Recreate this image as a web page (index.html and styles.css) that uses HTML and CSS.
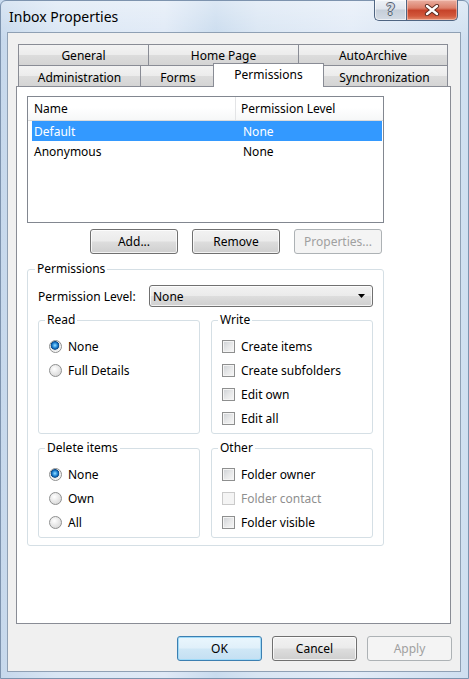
FILE: index.html
```html
<!DOCTYPE html>
<html>
<head>
<meta charset="utf-8">
<title>Inbox Properties</title>
<link rel="stylesheet" href="styles.css">
</head>
<body>
<div class="window">
  <div class="titlebar">
    <span class="title">Inbox Properties</span>
    <div class="caption">
      <div class="cap-btn help"><span class="help-glyph">?</span></div>
      <div class="cap-btn close">
        <svg width="16" height="12" viewBox="0 0 16 12">
          <path d="M3 2 L13 10 M13 2 L3 10" stroke="#5a2a20" stroke-width="4.2" stroke-linecap="round" fill="none"/>
          <path d="M3 2 L13 10 M13 2 L3 10" stroke="#ffffff" stroke-width="2.4" stroke-linecap="round" fill="none"/>
        </svg>
      </div>
    </div>
  </div>
  <div class="client">
    <div class="tabs">
      <div class="tabrow row1">
        <div class="tab w-general">General</div>
        <div class="tab w-home">Home Page</div>
        <div class="tab w-archive">AutoArchive</div>
      </div>
      <div class="tabrow row2">
        <div class="tab w-admin">Administration</div>
        <div class="tab w-forms">Forms</div>
        <div class="tab selected w-perm">Permissions</div>
        <div class="tab w-sync">Synchronization</div>
      </div>
    </div>
    <div class="panel">
      <div class="listview">
        <div class="lv-header">
          <div class="lv-col c-name">Name</div>
          <div class="lv-col c-level">Permission Level</div>
          <div class="lv-fill"></div>
        </div>
        <div class="lv-row selected">
          <span class="c-name">Default</span>
          <span class="c-level">None</span>
        </div>
        <div class="lv-row">
          <span class="c-name">Anonymous</span>
          <span class="c-level">None</span>
        </div>
      </div>
      <div class="list-buttons">
        <button class="btn">Add...</button>
        <button class="btn">Remove</button>
        <button class="btn disabled">Properties...</button>
      </div>
      <fieldset class="group outer">
        <legend>Permissions</legend>
        <div class="level-row">
          <span class="level-label">Permission Level:</span>
          <div class="combo">
            <span>None</span>
            <svg width="7" height="4" viewBox="0 0 7 4"><path d="M0 0 H7 L3.5 4 Z" fill="#000"/></svg>
          </div>
        </div>
        <div class="subgrid">
          <fieldset class="group sub">
            <legend>Read</legend>
            <div class="opt"><span class="radio checked"></span>None</div>
            <div class="opt"><span class="radio"></span>Full Details</div>
          </fieldset>
          <fieldset class="group sub">
            <legend>Write</legend>
            <div class="opt"><span class="check"></span>Create items</div>
            <div class="opt"><span class="check"></span>Create subfolders</div>
            <div class="opt"><span class="check"></span>Edit own</div>
            <div class="opt"><span class="check"></span>Edit all</div>
          </fieldset>
          <fieldset class="group sub">
            <legend>Delete items</legend>
            <div class="opt"><span class="radio checked"></span>None</div>
            <div class="opt"><span class="radio"></span>Own</div>
            <div class="opt"><span class="radio"></span>All</div>
          </fieldset>
          <fieldset class="group sub">
            <legend>Other</legend>
            <div class="opt"><span class="check"></span>Folder owner</div>
            <div class="opt disabled"><span class="check"></span>Folder contact</div>
            <div class="opt"><span class="check"></span>Folder visible</div>
          </fieldset>
        </div>
      </fieldset>
    </div>
    <div class="dialog-buttons">
      <button class="btn dlg default">OK</button>
      <button class="btn dlg">Cancel</button>
      <button class="btn dlg disabled">Apply</button>
    </div>
  </div>
</div>
</body>
</html>
```
FILE: styles.css
```css
* { box-sizing: border-box; }
html, body { margin: 0; padding: 0; }
body {
  width: 469px;
  height: 679px;
  overflow: hidden;
  font-family: "Noto Sans", "Segoe UI", sans-serif;
  font-size: 12px;
  color: #000;
  background: #c9dbef;
}

.window {
  width: 469px;
  height: 679px;
  display: flex;
  flex-direction: column;
  padding: 0 7px 6px 6px;
  border: 1px solid #7d93ae;
  border-radius: 6px 6px 0 0;
  background:
    linear-gradient(180deg, rgba(255,255,255,0.35) 0%, rgba(255,255,255,0) 40px),
    linear-gradient(90deg, #c6d8ec 0%, #d9e6f4 12%, #dfe9f6 35%, #c9dbee 46%, #d8e5f3 55%, #e2ebf7 75%, #cfdff0 100%);
}

/* title bar */
.titlebar {
  height: 31px;
  display: flex;
  align-items: flex-start;
}
.title {
  font-size: 14px;
  line-height: 18px;
  margin: 7px 0 0 2px;
}
.caption {
  margin: -1px 3px 0 auto;
  display: flex;
}
.cap-btn {
  height: 21px;
  display: flex;
  align-items: center;
  justify-content: center;
  border: 1px solid #4f6582;
  border-top: none;
}
.help {
  width: 32px;
  border-right: none;
  border-radius: 0 0 0 5px;
  background: linear-gradient(180deg, #eef2f7 0%, #dfe5ed 45%, #c5ced9 50%, #d3dbe5 100%);
  box-shadow: inset 0 0 0 1px rgba(255,255,255,0.6);
}
.help-glyph {
  font-family: "DejaVu Sans", sans-serif;
  font-weight: bold;
  font-size: 15px;
  line-height: 15px;
  color: #d2d8e0;
  text-shadow: 1px 0 0 #55606e, -1px 0 0 #55606e, 0 1px 0 #55606e, 0 -1px 0 #55606e;
}
.close {
  width: 52px;
  border-radius: 0 0 5px 0;
  background: linear-gradient(180deg, #eab0a2 0%, #dc7f6a 40%, #c6432a 52%, #d2583c 80%, #e28a6c 100%);
  box-shadow: inset 0 0 0 1px rgba(255,220,210,0.5);
}

/* client */
.client {
  flex: 1;
  display: flex;
  flex-direction: column;
  background: #f0f0f0;
  border: 1px solid #8fa0b4;
  padding: 11px 8px 10px 8px;
}

.tabs {
  margin: 0 4px 0 2px;
}
.tabrow {
  display: flex;
  height: 21px;
}
.tab {
  height: 21px;
  border: 1px solid #898c95;
  border-bottom: none;
  margin-left: -1px;
  background: linear-gradient(180deg, #f3f3f3 0%, #ececec 48%, #dcdcdc 52%, #d4d4d4 100%);
  display: flex;
  align-items: center;
  justify-content: center;
  white-space: nowrap;
  flex: none;
}
.tab:first-child { margin-left: 0; }
.row2 .tab { padding-top: 2px; }
.w-general { width: 131px; }
.w-home { width: 151px; }
.w-archive { width: 150px; }
.w-admin { width: 123px; }
.w-forms { width: 76px; }
.w-perm { width: 107px; }
.w-sync { width: 127px; }
.tab.selected {
  width: 111px;
  height: 24px;
  margin: -2px -2px 0 -3px;
  padding: 0 0 3px 0;
  background: #fff;
  position: relative;
  z-index: 2;
}

.panel {
  flex: 1;
  margin: 0 1px 12px 0;
  background: #fff;
  border: 1px solid #898c95;
  padding: 9px 10px 0 10px;
}

/* list view */
.listview {
  width: 357px;
  height: 127px;
  border: 1px solid #828790;
  background: #fff;
}
.lv-header {
  display: flex;
  height: 24px;
  border-bottom: 1px solid #dadbdc;
  background: linear-gradient(180deg, #ffffff 0%, #ffffff 45%, #f6f7f8 100%);
}
.lv-col {
  display: flex;
  align-items: center;
}
.lv-header .c-name {
  width: 208px;
  padding-left: 6px;
  border-right: 1px solid #e3e4e6;
}
.lv-header .c-level {
  width: 145px;
  padding-left: 5px;
}
.lv-fill { flex: 1; }
.lv-row {
  display: flex;
  align-items: center;
  height: 20px;
  margin: 0 1px 0 4px;
}
.lv-row .c-name { width: 206px; padding-left: 2px; }
.lv-row .c-level { padding-left: 5px; }
.lv-row.selected {
  background: #3399ff;
  color: #fff;
}

/* buttons */
.list-buttons {
  width: 357px;
  display: flex;
  justify-content: flex-end;
  gap: 14px;
  padding-right: 2px;
  margin-top: 6px;
}
.btn {
  width: 88px;
  height: 25px;
  padding: 0;
  border: 1px solid #707070;
  border-radius: 3px;
  background: linear-gradient(180deg, #f2f2f2 0%, #ebebeb 48%, #dddddd 52%, #cfcfcf 100%);
  box-shadow: inset 0 0 0 1px rgba(255,255,255,0.75);
  font-family: inherit;
  font-size: 12px;
  color: #000;
}
.btn.disabled {
  border-color: #adb2b5;
  background: #f4f4f4;
  box-shadow: none;
  color: #a0a0a0;
}
.btn.default {
  border-color: #3c7fb1;
  background: linear-gradient(180deg, #eaf6fd 0%, #e0f0fa 48%, #cfe7f6 52%, #c4dff2 100%);
  box-shadow: inset 0 0 0 1px #9fdaf8;
}

/* group boxes */
.group {
  margin: 0;
  min-width: 0;
  border: 1px solid #d5dfe5;
  border-radius: 3px;
}
.group legend {
  padding: 0 2px;
  line-height: 16px;
}
.outer {
  width: 357px;
  margin-top: 7px;
  padding: 8px 10px 7px 10px;
}
.outer > legend { margin-left: -3px; }

.level-row {
  display: flex;
  align-items: center;
  height: 22px;
}
.level-label { width: 111px; }
.combo {
  width: 224px;
  height: 22px;
  border: 1px solid #707070;
  border-radius: 3px;
  background: linear-gradient(180deg, #f2f2f2 0%, #ebebeb 48%, #dddddd 52%, #cfcfcf 100%);
  box-shadow: inset 0 0 0 1px rgba(255,255,255,0.75);
  display: flex;
  align-items: center;
  justify-content: space-between;
  padding: 0 7px 0 3px;
}

.subgrid {
  margin-top: 5px;
  display: grid;
  grid-template-columns: 162px 162px;
  column-gap: 11px;
  row-gap: 6px;
}
.sub {
  padding: 6px 10px 3px 10px;
}
.sub > legend { margin-left: -4px; }

.opt {
  height: 24px;
  display: flex;
  align-items: center;
  gap: 6px;
  white-space: nowrap;
}
.opt.disabled { color: #8f8f8f; }

.radio {
  width: 13px;
  height: 13px;
  border-radius: 50%;
  border: 1px solid #8e8f8f;
  background: radial-gradient(circle at 40% 35%, #ffffff 0%, #e9e9e9 45%, #cfcfcf 100%);
  flex: none;
}
.radio.checked {
  background: radial-gradient(circle at 45% 40%, #9fe0ff 0px, #45a6ea 1.6px, #1168b7 3.2px, #0b4a86 4px, #e4e4e4 4.6px, #f6f6f6 6px);
}
.check {
  width: 13px;
  height: 13px;
  border: 1px solid #8e8f8f;
  background: linear-gradient(135deg, #cdd0d4 0%, #e6e7e8 50%, #f7f7f7 100%);
  box-shadow: inset 0 0 0 1px #f4f4f4;
  flex: none;
}
.opt.disabled .check {
  border-color: #cacaca;
  background: #f4f4f4;
  box-shadow: none;
}

.dialog-buttons {
  display: flex;
  justify-content: flex-end;
  gap: 10px;
}
.btn.dlg { width: 85px; }
```
